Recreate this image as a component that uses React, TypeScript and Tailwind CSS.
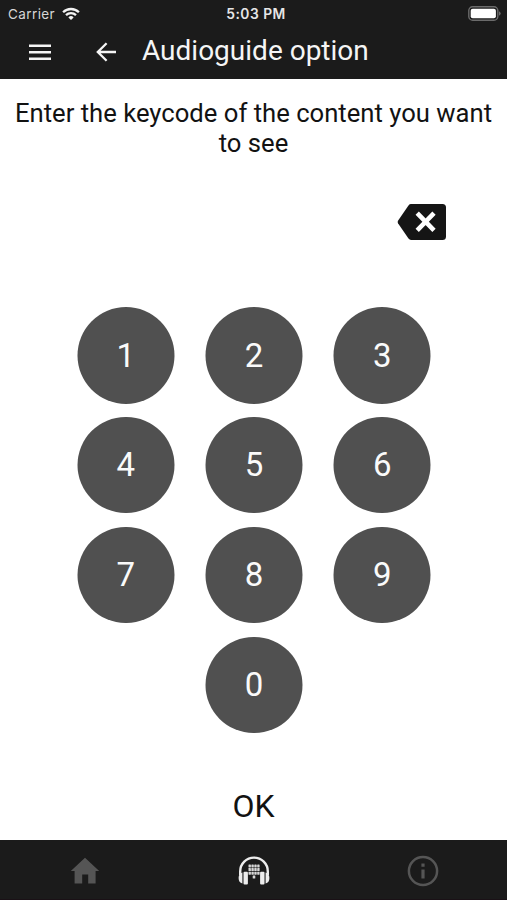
const keys = ['1', '2', '3', '4', '5', '6', '7', '8', '9', '0'];

function StatusBar() {
  return (
    <div className="grid h-[27px] grid-cols-3 items-center pl-2 pr-[6px] font-[Inter,sans-serif] text-[13px] leading-4">
      <div className="flex items-center gap-[5px] text-[#d6d6d6]">
        <span className="w-[49px] whitespace-nowrap text-[13.5px] tracking-[0.4px]">Carrier</span>
        <svg width="18" height="14" viewBox="0 0 18 14" fill="none" stroke="#f2f2f2" strokeWidth="2.3">
          <path d="M1.1 5.2a11.3 11.3 0 0 1 15.8 0" />
          <path d="M4 8.2a7.2 7.2 0 0 1 10 0" />
          <path d="M9 13 6.4 10.4a3.7 3.7 0 0 1 5.2 0Z" fill="#f2f2f2" stroke="none" />
        </svg>
      </div>
      <span className="whitespace-nowrap pl-[3px] text-center text-[13.8px] font-semibold tracking-[0.5px] text-[#e6e6e6]">5:03 PM</span>
      <svg className="justify-self-end" width="33" height="15" viewBox="0 0 33 15">
        <rect x="0.8" y="0.8" width="29" height="13.4" rx="3.8" fill="none" stroke="#6b6b6b" strokeWidth="1.4" />
        <rect x="2.7" y="2.7" width="25.2" height="9.6" rx="2" fill="#fff" />
        <path d="M31 5.2q1.7.8 1.7 2.3T31 9.8Z" fill="#6b6b6b" />
      </svg>
    </div>
  );
}

function Header() {
  return (
    <header className="h-[79px] shrink-0 bg-[#1b1b1b] text-[#f5f5f5]">
      <StatusBar />
      <div className="flex h-[50px] items-center pl-[29px]">
        <button aria-label="Menu">
          <svg width="22" height="18" viewBox="0 0 22 18" fill="#f5f5f5">
            <path d="M0 1.500h22v2.400H0zM0 8.100h22v2.400H0zM0 14.600h22V17H0z" />
          </svg>
        </button>
        <button className="ml-[45px]" aria-label="Back">
          <svg width="20" height="20" viewBox="0 0 20 20" fill="none" stroke="#f5f5f5" strokeWidth="2.3">
            <path d="M20 10H2M10.600 1.200 1.800 10l8.800 8.800" />
          </svg>
        </button>
        <h1 className="ml-[26px] whitespace-nowrap pb-[2px] text-[28px] leading-[34px]">Audioguide option</h1>
      </div>
    </header>
  );
}

function Keypad() {
  return (
    <div className="mx-auto mt-[66px] grid w-[353px] translate-x-[0.5px] grid-cols-3 justify-between gap-y-[13.4px]">
      {keys.map((key) => (
        <button
          key={key}
          className={
            key === '0'
              ? 'col-start-2 flex size-[96.5px] items-center justify-center justify-self-center rounded-full bg-[#505050] text-[33px] text-[#fafafa]'
              : 'flex size-[96.5px] items-center justify-center rounded-full bg-[#505050] text-[33px] text-[#fafafa] nth-[3n+1]:justify-self-start nth-[3n+2]:justify-self-center nth-[3n]:justify-self-end'
          }
        >
          {key}
        </button>
      ))}
    </div>
  );
}

function BottomNav() {
  return (
    <nav className="grid h-[60px] shrink-0 grid-cols-3 items-center border-b border-[#1a1116] bg-[#1b1b1b] pt-[3px]">
      <svg className="justify-self-center" width="30" height="28" viewBox="0 0 30 28" fill="#555">
        <path d="M15 .8 29.200 14h-3.600v12.500h-7.400v-9h-6v9H4.600V14H.8Z" />
      </svg>
      <svg className="justify-self-center" width="34" height="30" viewBox="0 0 34 30">
        <path d="M3.200 19v-3.600a13.800 13.800 0 0 1 27.600 0V19" fill="none" stroke="#ededed" strokeWidth="2.4" />
        <g fill="#ededed">
          <path d="M5.400 16.500v11Q1.600 26.500 1.600 22t3.800-5.500ZM28.600 16.500v11q3.800-1 3.800-5.500t-3.800-5.500Z" />
          <rect x="6.500" y="15.700" width="4.400" height="12.900" rx="1" />
          <rect x="23.100" y="15.700" width="4.400" height="12.900" rx="1" />
        </g>
        <g fill="#d8d8d8">
          {[8.5, 12.1, 15.7].map((y) =>
            [11.5, 14.4, 17.3, 20.2].map((x) => <rect key={`${x}-${y}`} x={x} y={y} width="2.400" height="3" rx="0.400" />),
          )}
          <rect x="15.700" y="19.400" width="2.600" height="3.200" rx="0.500" />
        </g>
      </svg>
      <svg className="justify-self-center" width="32" height="32" viewBox="0 0 32 32">
        <circle cx="16" cy="16" r="14.100" fill="none" stroke="#555" strokeWidth="2.500" />
        <path d="M14.400 8.500h3.200v3.200h-3.200zM14.400 14.500h3.200v9h-3.200z" fill="#555" />
      </svg>
    </nav>
  );
}

export default function App() {
  return (
    <div className="flex h-[900px] w-[507px] flex-col overflow-hidden bg-white font-[Roboto,sans-serif] text-[#121212]">
      <Header />
      <main className="flex grow flex-col">
        <p className="mt-[18.5px] text-center text-[25.65px] leading-[30px]">
          Enter the keycode of the content you want
          <br />
          to see
        </p>
        <button className="mr-[60px] mt-[45.5px] self-end" aria-label="Delete">
          <svg className="block" width="50" height="38" viewBox="0 0 50 38">
            <path
              d="M14 1h31.500Q49 1 49 4.500v29Q49 37 45.500 37H14q-1.500 0-2.500-1.400L1 20.200q-.8-1.200 0-2.400L11.500 2.400Q12.500 1 14 1Z"
              fill="#151515"
            />
            <path d="m20.200 10.200 16.800 17.200m0-17.200-16.800 17.200" stroke="#fff" strokeWidth="4.6" />
          </svg>
        </button>
        <Keypad />
        <button className="mt-[52px] self-center text-[32px] leading-[42px]">OK</button>
      </main>
      <BottomNav />
    </div>
  );
}
